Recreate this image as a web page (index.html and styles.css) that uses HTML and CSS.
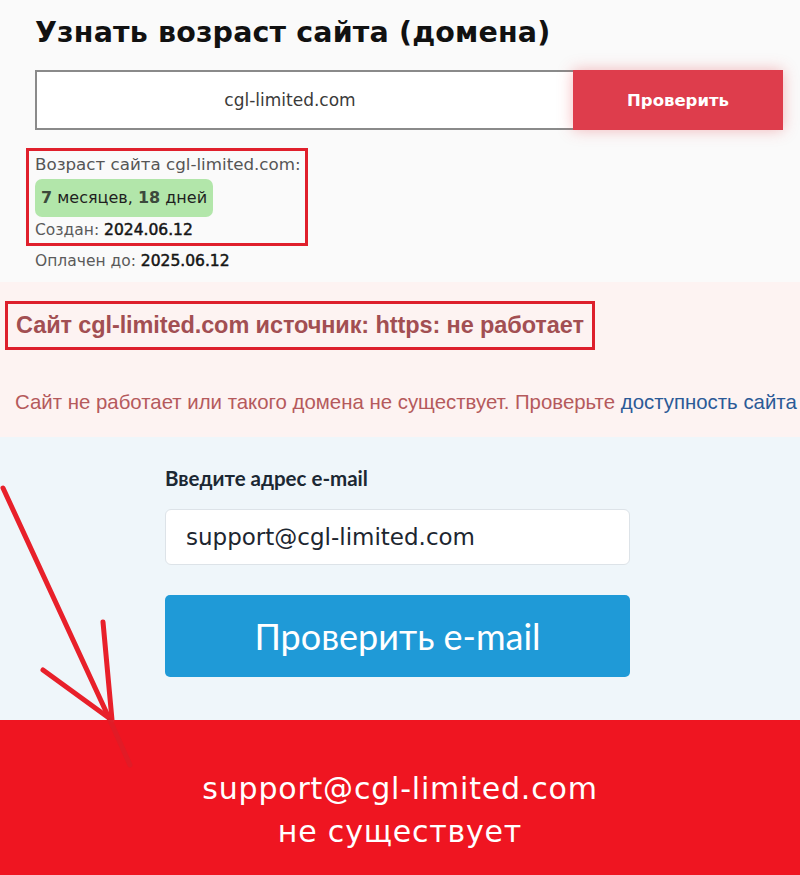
FILE: index.html
```html
<!DOCTYPE html>
<html lang="ru">
<head>
<meta charset="utf-8">
<title>Узнать возраст сайта</title>
<link rel="stylesheet" href="styles.css">
</head>
<body>
<div class="page">
  <section class="age">
    <h1 class="age-title">Узнать возраст сайта (домена)</h1>
    <form class="domain-form">
      <div class="domain-input">cgl-limited.com</div>
      <button type="button" class="domain-btn">Проверить</button>
    </form>
    <div class="age-result">
      <div class="age-label">Возраст сайта cgl-limited.com:</div>
      <div class="age-pill"><b>7</b> месяцев, <b>18</b> дней</div>
      <div class="age-line">Создан: <span class="val">2024.06.12</span></div>
    </div>
    <div class="age-line paid">Оплачен до: <span class="val">2025.06.12</span></div>
  </section>

  <section class="status">
    <div class="status-title">Сайт cgl-limited.com источник: https: не работает</div>
    <p class="status-text">Сайт не работает или такого домена не существует. Проверьте <a href="#" class="status-link">доступность сайта</a></p>
  </section>

  <section class="email">
    <div class="email-form">
      <label class="email-label">Введите адрес e-mail</label>
      <div class="email-input">support@cgl-limited.com</div>
      <button type="button" class="email-btn">Проверить e-mail</button>
    </div>
  </section>

  <section class="verdict">
    <div class="verdict-mail">support@cgl-limited.com</div>
    <div class="verdict-text">не существует</div>
  </section>

  <svg class="arrow" width="160" height="320" viewBox="0 0 160 320">
    <g stroke="#e8202a" stroke-width="5" stroke-linecap="round" fill="none">
      <line x1="3" y1="28" x2="109" y2="258"/>
      <line x1="103" y1="162" x2="112" y2="260"/>
      <line x1="43" y1="210" x2="109" y2="258"/>
    </g>
    <line x1="110" y1="260" x2="130" y2="305" stroke="#d8202a" stroke-width="5" stroke-linecap="round" opacity="0.6"/>
  </svg>
</div>
</body>
</html>
```

FILE: styles.css
```css
html, body {
  margin: 0;
  padding: 0;
}
body {
  width: 800px;
  height: 875px;
  overflow: hidden;
  background: #fafafa;
}
.page {
  position: relative;
  width: 800px;
  height: 875px;
}

/* ---------- age section ---------- */
.age {
  background: #fafafa;
  padding: 14px 0 0 35px;
  height: 282px;
  box-sizing: border-box;
  font-family: "DejaVu Sans", "Open Sans", sans-serif;
}
.age-title {
  margin: 0;
  font-size: 28.5px;
  font-weight: 700;
  color: #111;
  line-height: 38px;
  letter-spacing: 0.15px;
}
.domain-form {
  display: flex;
  margin-top: 18px;
  width: 748px;
  height: 60px;
}
.domain-input {
  flex: 1;
  border: 2px solid #8a8a8a;
  border-right: none;
  background: #fff;
  display: flex;
  align-items: center;
  justify-content: center;
  padding-right: 30px;
  font-size: 17px;
  color: #3a3a3a;
}
.domain-btn {
  width: 210px;
  border: none;
  background: #de3d4c;
  color: #fff;
  font-family: "DejaVu Sans", sans-serif;
  font-weight: 700;
  font-size: 16.5px;
  box-shadow: 0 0 14px rgba(230, 60, 70, 0.35);
}
.age-result {
  margin: 18px 0 0 -9px;
  width: 282px;
  box-sizing: border-box;
  border: 3px solid #e0202c;
  padding: 2px 6px 2px 6px;
}
.age-label {
  font-size: 16.7px;
  color: #555;
  line-height: 22px;
  white-space: nowrap;
}
.age-pill {
  display: inline-block;
  margin: 4px 0 2px;
  padding: 0 6px;
  height: 38px;
  line-height: 38px;
  background: #b2e6aa;
  border-radius: 7px;
  font-size: 16px;
  color: #1f1f1f;
}
.age-pill b {
  font-weight: 700;
  color: #3c4a3c;
}
.age-line {
  font-size: 15.5px;
  color: #5a5a5a;
  line-height: 22px;
  white-space: nowrap;
}
.age-line .val {
  color: #151515;
  -webkit-text-stroke: 0.5px #151515;
}
.paid {
  margin-top: 4px;
}

/* ---------- status section ---------- */
.status {
  background: #fdf3f2;
  height: 155px;
  padding-top: 19px;
  box-sizing: border-box;
  font-family: "Liberation Sans", sans-serif;
}
.status-title {
  display: inline-block;
  margin-left: 5px;
  border: 3px solid #dd1f2c;
  padding: 7px 8px 8px 8px;
  font-size: 23.5px;
  font-weight: 700;
  color: #a24f52;
  line-height: 28px;
  letter-spacing: -0.1px;
}
.status-text {
  margin: 41px 0 0 15px;
  font-size: 20.4px;
  color: #b55a5c;
  white-space: nowrap;
}
.status-link {
  color: #2b5a97;
  text-decoration: none;
}

/* ---------- email section ---------- */
.email {
  background: #eff6fa;
  height: 283px;
  box-sizing: border-box;
  padding: 28px 0 0 165px;
  font-family: "Lato", "Open Sans", sans-serif;
}
.email-form {
  width: 465px;
}
.email-label {
  display: block;
  font-size: 20.5px;
  font-weight: 700;
  color: #1c2833;
  line-height: 26px;
}
.email-input {
  margin-top: 18px;
  height: 56px;
  box-sizing: border-box;
  background: #fff;
  border: 1px solid #dde3e8;
  border-radius: 6px;
  padding-left: 20px;
  display: flex;
  align-items: center;
  font-family: "DejaVu Sans", sans-serif;
  font-size: 23px;
  color: #1d2630;
}
.email-btn {
  display: block;
  margin-top: 30px;
  width: 100%;
  height: 82px;
  border: none;
  border-radius: 5px;
  background: #1f9ad7;
  color: #fff;
  font-family: "Lato", sans-serif;
  font-size: 36px;
}

/* ---------- verdict ---------- */
.verdict {
  background: #ef1521;
  height: 155px;
  box-sizing: border-box;
  padding-top: 47px;
  text-align: center;
  color: #fff;
  font-family: "DejaVu Sans", sans-serif;
  font-size: 30px;
  letter-spacing: 0.8px;
  line-height: 43px;
}

/* ---------- arrow overlay ---------- */
.arrow {
  position: absolute;
  left: 0;
  top: 460px;
}
```
